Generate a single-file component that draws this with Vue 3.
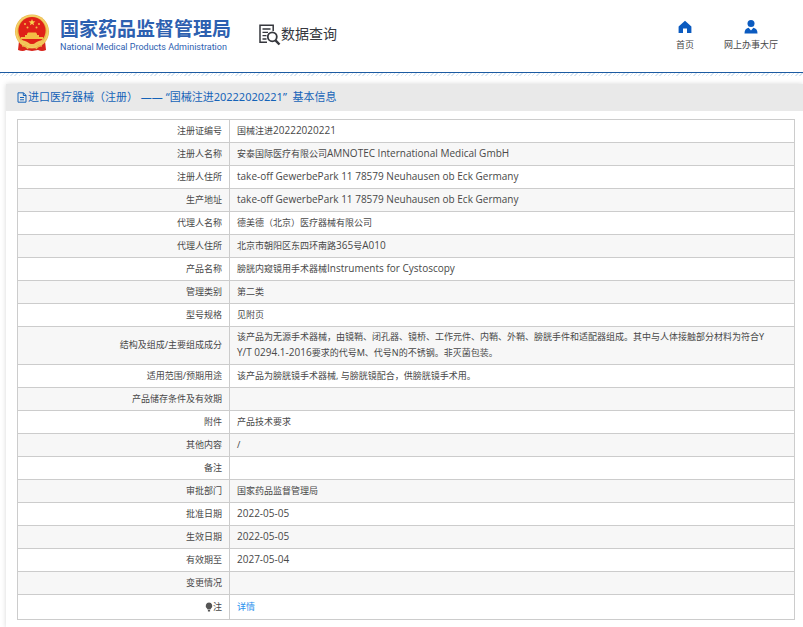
<script setup>
const rows = [
  ['注册证编号', '国械注进20222020221'],
  ['注册人名称', '安泰国际医疗有限公司AMNOTEC International Medical GmbH'],
  ['注册人住所', 'take-off GewerbePark 11 78579 Neuhausen ob Eck Germany'],
  ['生产地址', 'take-off GewerbePark 11 78579 Neuhausen ob Eck Germany'],
  ['代理人名称', '德美德（北京）医疗器械有限公司'],
  ['代理人住所', '北京市朝阳区东四环南路365号A010'],
  ['产品名称', '膀胱内窥镜用手术器械Instruments for Cystoscopy'],
  ['管理类别', '第二类'],
  ['型号规格', '见附页'],
  ['结构及组成/主要组成成分', '该产品为无源手术器械，由镜鞘、闭孔器、镜桥、工作元件、内鞘、外鞘、膀胱手件和适配器组成。其中与人体接触部分材料为符合Y\nY/T 0294.1-2016要求的代号M、代号N的不锈钢。非灭菌包装。'],
  ['适用范围/预期用途', '该产品为膀胱镜手术器械, 与膀胱镜配合，供膀胱镜手术用。'],
  ['产品储存条件及有效期', ''],
  ['附件', '产品技术要求'],
  ['其他内容', '/'],
  ['备注', ''],
  ['审批部门', '国家药品监督管理局'],
  ['批准日期', '2022-05-05'],
  ['生效日期', '2022-05-05'],
  ['有效期至', '2027-05-04'],
  ['变更情况', ''],
]

// Latin words and numbers are set one size larger than the Chinese text around them.
const runs = (text) =>
  text
    .split(/([\x20-\x7f]{3,})/)
    .filter(Boolean)
    .map((t) => ({ t, latin: /^[\x20-\x7f]{3,}$/.test(t) }))
</script>

<template>
  <div class="page">
    <header class="header">
      <a class="brand" href="#">
        <svg class="emblem" viewBox="0 0 36 38" aria-hidden="true">
          <path d="M5 27 L4 36 Q9 38 12 36 L18 37 L24 36 Q28 38 32 36 L31 27 Z" fill="#d9251d" />
          <circle cx="18" cy="17.5" r="17" fill="#e9b949" />
          <circle cx="18" cy="17.5" r="15.6" fill="none" stroke="#f4cf68" stroke-width="1.6" />
          <circle cx="18" cy="16.5" r="13.6" fill="#df2118" />
          <path d="M18 5 l.9 2.3 2.5.1 -2 1.5 .7 2.4 -2.1-1.4 -2.1 1.4 .7-2.4 -2-1.5 2.5-.1z" fill="#f8d34f" />
          <g fill="#f3bf45">
            <circle cx="11" cy="10" r="1" /><circle cx="25" cy="10" r="1" />
            <circle cx="13.5" cy="13.5" r="1" /><circle cx="22.5" cy="13.5" r="1" />
            <path d="M13 20 L14 18.5 H22 L23 20 V21 H25 V23 H29 V25 H7 V23 H11 V21 H13 Z" />
          </g>
          <path d="M5 27 Q11 25 16 30 H20 Q25 25 31 27 L29 30 Q24 29 21 33 H15 Q12 29 7 30 Z" fill="#f3c45a" />
          <path d="M8 32 Q12 31 14 35 M28 32 Q24 31 22 35" fill="none" stroke="#eeb648" stroke-width="1.4" />
        </svg>
        <span class="names">
          <strong class="name-zh">国家药品监督管理局</strong>
          <span class="name-en">National Medical Products Administration</span>
        </span>
      </a>
      <div class="section">
        <svg class="search-icon" viewBox="0 0 22 22" fill="none" stroke="#35373d" aria-hidden="true">
          <path d="M8 18.2 H1 V1.2 H14.2 V7" stroke-width="1.5" />
          <path d="M3.5 5 H11.5 M3.5 8.3 H9 M3.5 11.6 H7.5 M3.5 15 H7.5" stroke-width="1.3" />
          <circle cx="13.3" cy="12.8" r="4.5" stroke-width="1.8" />
          <path d="M16.5 16.4 L20.5 20.5" stroke-width="2.4" />
        </svg>
        <span>数据查询</span>
      </div>
      <nav class="nav">
        <a href="#">
          <svg viewBox="0 0 14 14" aria-hidden="true"><path d="M7 .8 L13.4 6.4 V13 H9 V8.6 H5 V13 H.6 V6.4 Z" fill="#0b5bc0" /></svg>
          <span>首页</span>
        </a>
        <a href="#">
          <svg viewBox="0 0 14 14" aria-hidden="true">
            <circle cx="7" cy="3.6" r="3.5" fill="#0b5bc0" />
            <path d="M.5 13.6 Q.5 8.6 4.6 7.8 L7 10.6 L9.4 7.8 Q13.5 8.6 13.5 13.6 Z" fill="#0b5bc0" />
          </svg>
          <span>网上办事大厅</span>
        </a>
      </nav>
    </header>
    <div class="hatch"></div>

    <main class="panel">
      <h1 class="title">
        <svg viewBox="0 0 10 11" fill="none" stroke="#1563b8" aria-hidden="true">
          <path d="M1 .8 H6.5 L9 3.3 V10.2 H1 Z M6.3 .8 V3.5 H9 M3 5.5 H7 M3 7.8 H7" />
        </svg>
        <span>进口医疗器械（注册） —— “国械注进20222020221”&nbsp; 基本信息</span>
      </h1>
      <table class="info">
        <tbody>
          <tr v-for="[label, value] in rows" :key="label">
            <th scope="row">{{ label }}</th>
            <td><span v-for="(r, i) in runs(value)" :key="i" :class="{ latin: r.latin }">{{ r.t }}</span></td>
          </tr>
          <tr class="last">
            <th scope="row">
              <svg class="bulb" viewBox="0 0 8 10" aria-hidden="true"><path d="M4 .5 A3.3 3.3 0 0 1 6 6.4 L5.4 7.4 H2.6 L2 6.4 A3.3 3.3 0 0 1 4 .5 Z M2.9 8 H5.1 V9.5 H2.9 Z" fill="#555" /></svg>注
            </th>
            <td><a class="detail" href="#">详情</a></td>
          </tr>
        </tbody>
      </table>
    </main>
  </div>
</template>

<style>
body {
  margin: 0;
  background: #fff;
}
</style>

<style scoped>
.page {
  font-family: "Noto Sans", "Noto Sans CJK SC", sans-serif;
  font-size: 9px;
  color: #484848;
}
a {
  color: inherit;
  text-decoration: none;
}
svg {
  flex: none;
}
.header {
  display: flex;
  align-items: flex-start;
  padding: 0 25px 18px 14px;
  border-bottom: 1px solid #1c5ba2;
}
.brand {
  display: flex;
  gap: 10px;
  padding-top: 14px;
  color: #2d60b0;
}
.emblem {
  width: 36px;
  height: 38px;
}
.names {
  display: flex;
  flex-direction: column;
  padding-top: 2px;
}
.name-zh {
  font-family: "Noto Sans CJK SC", sans-serif;
  font-size: 19px;
  line-height: 24px;
  white-space: nowrap;
}
.name-en {
  font-family: Roboto, sans-serif;
  font-size: 9px;
  line-height: 14px;
  white-space: nowrap;
}
.section {
  display: flex;
  padding-top: 24px;
  margin-left: 28px;
  font-size: 14px;
  line-height: 20px;
  color: #35373d;
  white-space: nowrap;
}
.search-icon {
  width: 22px;
  height: 22px;
}
.nav {
  display: flex;
  gap: 30px;
  margin-left: auto;
  padding-top: 20px;
}
.nav a {
  display: flex;
  flex-direction: column;
  align-items: center;
  gap: 4px;
  line-height: 14px;
  white-space: nowrap;
}
.nav svg {
  width: 14px;
  height: 14px;
}
.hatch {
  height: 3px;
  background: repeating-linear-gradient(135deg, #d9e6f2 0 1px, #fff 1px 3px);
}
.panel {
  margin: 8px 0 0 6px;
  padding-bottom: 8px;
  box-shadow: 0 0 5px #d8d8d8;
}
.title {
  display: flex;
  align-items: center;
  gap: 1px;
  margin: 0 0 8px;
  padding: 5px 0 6px 11px;
  background: #e9e9e9;
  color: #1563b8;
  font-size: 11px;
  font-weight: 400;
  line-height: 16px;
  white-space: nowrap;
}
.title svg {
  width: 10px;
  height: 11px;
}
.info {
  width: calc(100% - 19px);
  margin-left: 11px;
  border-collapse: collapse;
  table-layout: fixed;
  border: 1px solid #ccc;
}
.info tr {
  height: 23px;
}
.info tr:nth-child(even) {
  background: #f7f7f7;
}
.info .last {
  height: 25px;
}
.info th,
.info td {
  padding: 2px 7px 3px;
  border: 1px solid #ccc;
  line-height: 16px;
  font-weight: 400;
  text-align: left;
  vertical-align: middle;
}
.info th {
  width: 197px;
  text-align: right;
}
.info td {
  white-space: pre-line;
}
.latin {
  font-family: "Open Sans", "Noto Sans", sans-serif;
  font-size: 10px;
  line-height: 10px;
}
.bulb {
  width: 8px;
  height: 10px;
  vertical-align: -2px;
}
.detail {
  color: #2a8fee;
}
</style>
